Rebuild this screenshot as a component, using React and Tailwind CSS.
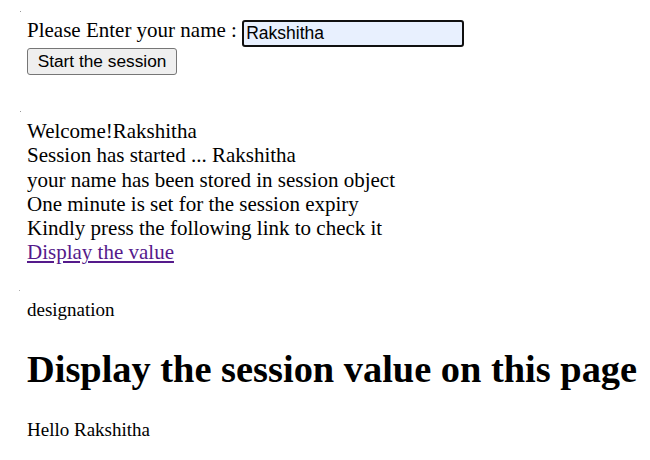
import React from "react";

// session demo page: form on top, session messages, then the display page below
export default function App() {
  const name = "Rakshitha";

  return (
    <div className="min-h-[460px] bg-white pl-[27px] font-['Liberation_Serif',serif] text-black">
      <div className="ml-[-7px] pt-[11px] pb-[8px]">
        <div className="w-px h-px bg-[#9a9a9a]" />
      </div>

      {/* form */}
      <div className="flex items-start">
        <span className="mt-[-2px] text-[21px] leading-[24px] whitespace-pre">
          {"Please Enter your name : "}
        </span>
        <input
          type="text"
          defaultValue={name}
          className="w-[222px] h-[27px] rounded-[3px] border-2 border-[#101010] bg-[#e8f0fe] px-[2px] font-['Liberation_Sans',Arial,sans-serif] text-[17.5px] text-black outline-none"
        />
      </div>
      <button className="mt-px h-[27px] w-[150px] rounded-[3px] border border-[#767676] bg-[#efefef] font-['Liberation_Sans',Arial,sans-serif] text-[17.3px] leading-[25px] text-black">
        Start the session
      </button>

      <div className="ml-[-7px] mt-[36px] h-[8px]">
        <div className="w-px h-px bg-[#9a9a9a]" />
      </div>

      {/* session messages */}
      <div className="text-[21px] leading-[24.3px]">
        <div>Welcome!{name}</div>
        <div>Session has started ... {name}</div>
        <div>your name has been stored in session object</div>
        <div>One minute is set for the session expiry</div>
        <div>Kindly press the following link to check it</div>
        <a href="#" className="text-[#551a8b] underline">
          Display the value
        </a>
      </div>

      <div className="ml-[-8px] mt-[25px] h-[9px]">
        <div className="w-px h-px bg-[#b0b0b0]" />
      </div>

      {/* display page */}
      <p className="text-[19px] leading-[22px]">designation</p>
      <h1 className="mt-[26px] text-[38.4px] leading-[44px] font-bold whitespace-nowrap">
        Display the session value on this page
      </h1>
      <p className="mt-[28px] text-[19px] leading-[22px]">Hello {name}</p>
    </div>
  );
}
